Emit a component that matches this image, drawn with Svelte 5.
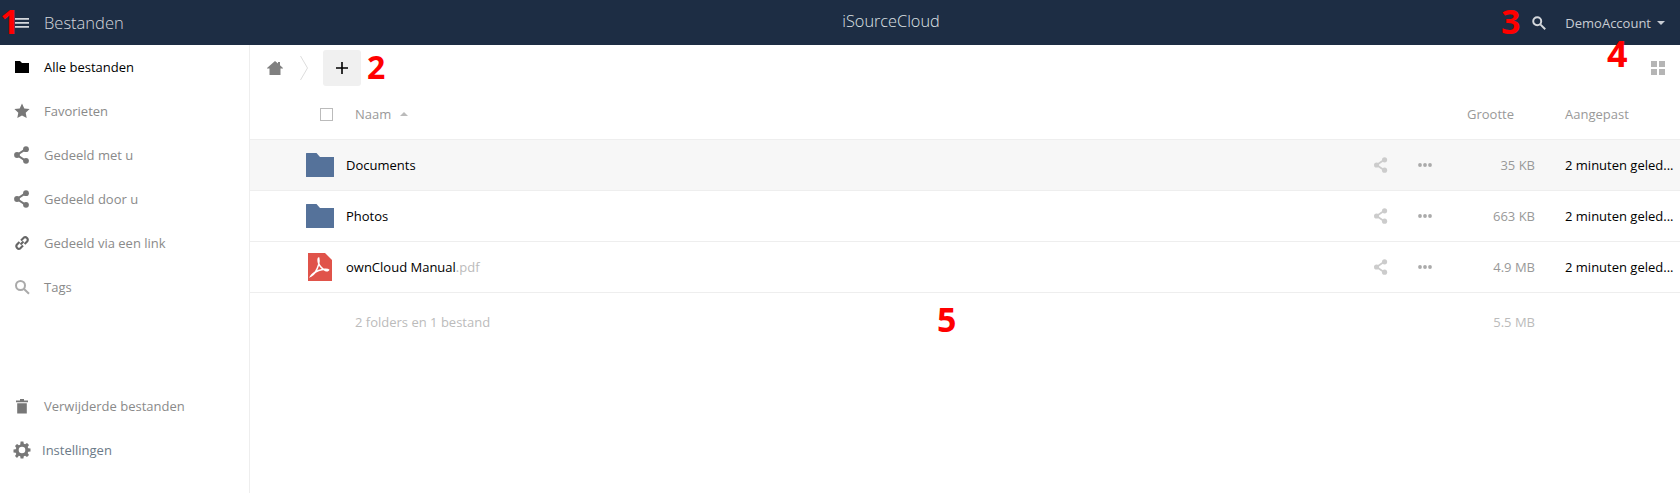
<script>
	const nav = [
		{ label: 'Alle bestanden', icon: 'folder', active: true },
		{ label: 'Favorieten', icon: 'star' },
		{ label: 'Gedeeld met u', icon: 'share' },
		{ label: 'Gedeeld door u', icon: 'share' },
		{ label: 'Gedeeld via een link', icon: 'link' },
		{ label: 'Tags', icon: 'search' }
	];
	const files = [
		{ name: 'Documents', ext: '', size: '35 KB', type: 'dir', hover: true },
		{ name: 'Photos', ext: '', size: '663 KB', type: 'dir' },
		{ name: 'ownCloud Manual', ext: '.pdf', size: '4.9 MB', type: 'pdf' }
	];
</script>

{#snippet shareShape()}
	<path class="share-line" d="M12.700 3.200L4 9l8.700 5.800" />
	<circle cx="13" cy="3.200" r="2.900" />
	<circle cx="4" cy="9" r="2.900" />
	<circle cx="13" cy="14.800" r="2.900" />
{/snippet}

{#snippet glyph(name)}
	<svg class="glyph {name}" viewBox="0 0 18 18" width="18" height="18">
		{#if name === 'folder'}
			<path d="M2 3h5l2 2h7v10H2z" />
		{:else if name === 'star'}
			<path d="M9 1.500l2.300 4.900 5.300.7-3.900 3.700 1 5.300L9 13.500l-4.700 2.600 1-5.300-3.900-3.700 5.300-.7z" />
		{:else if name === 'share'}
			{@render shareShape()}
		{:else if name === 'link'}
			<path class="line" d="M7.500 10.500l3-3M6.500 8l-2.700 2.700a2.600 2.600 0 0 0 3.600 3.600L10 11.600M8 6.400l2.700-2.700a2.600 2.600 0 0 1 3.600 3.600L11.600 10" />
		{:else if name === 'search'}
			<circle class="line" cx="7.500" cy="7.500" r="4.500" />
			<path class="line thick" d="M11 11l5 4.800" />
		{:else if name === 'trash'}
			<path d="M3 3.500h12v1.800H3zM7 2h4v1.500H7zM4.200 6.200h9.600V16.500H4.200z" />
		{:else if name === 'gear'}
			<path fill-rule="evenodd" d="M7.600 1h2.800l.4 2.200 1.300.6 1.900-1.300 2 2-1.300 1.900.6 1.300 2.200.4v2.800l-2.200.4-.6 1.300 1.300 1.900-2 2-1.900-1.300-1.300.6-.4 2.200H7.600l-.4-2.200-1.300-.6L4 17.500l-2-2 1.300-1.900-.6-1.300-2.200-.4V9.100l2.200-.4.6-1.300L2 5.500l2-2 1.900 1.300 1.300-.6zM9 6.200a3.300 3.300 0 1 0 0 6.600 3.300 3.300 0 0 0 0-6.600z" transform="translate(0 -.5)" />
		{/if}
	</svg>
{/snippet}

<div class="page">
	<header class="topbar">
		<div class="left">
			<svg class="burger" viewBox="0 0 14 12" width="14" height="12">
				<path d="M0 1h14v1.700H0zM0 5h14v1.700H0zM0 9h14v1.700H0z" />
			</svg>
			<span class="app-name">Bestanden</span>
		</div>
		<div class="brand">iSourceCloud</div>
		<div class="right">
			<svg class="top-search" viewBox="0 0 18 18" width="16" height="16">
				<circle cx="7" cy="7" r="4.500" />
				<path d="M10.500 10.500l5.500 5.500" />
			</svg>
			<span class="user">DemoAccount</span>
			<span class="caret"></span>
		</div>
	</header>

	<div class="body">
		<nav class="sidebar">
			<ul>
				{#each nav as item}
					<li class:active={item.active}>
						<span class="nav-icon">{@render glyph(item.icon)}</span>
						{item.label}
					</li>
				{/each}
			</ul>
			<ul class="bottom">
				<li class="trash">
					<span class="nav-icon">{@render glyph('trash')}</span>
					Verwijderde bestanden
				</li>
				<li class="settings">
					<span class="nav-icon">{@render glyph('gear')}</span>
					<span class="settings-label">Instellingen</span>
				</li>
			</ul>
		</nav>

		<main class="content">
			<div class="controls">
				<svg class="home" viewBox="0 0 16 14" width="16" height="14">
					<path d="M8 0l3 2.500V1h2v3.200L16 7v.6h-2.500V14h-11V7.600H0V7z" />
				</svg>
				<svg class="crumb" viewBox="0 0 8 24" width="8" height="24">
					<path d="M.5 0l7 12-7 12" />
				</svg>
				<button class="new" aria-label="Nieuw">
					<svg viewBox="0 0 12 12" width="12" height="12"><path d="M5.200 0h1.600v12H5.200zM0 5.200h12v1.600H0z" /></svg>
				</button>
				<svg class="grid-view" viewBox="0 0 14 14" width="14" height="14">
					<path d="M0 0h6v6H0zM8 0h6v6H8zM0 8h6v6H0zM8 8h6v6H8z" />
				</svg>
			</div>

			<div class="row head">
				<span class="check"></span>
				<span class="name-head">Naam <i class="sort"></i></span>
				<span class="size">Grootte</span>
				<span class="date">Aangepast</span>
			</div>

			{#each files as file}
				<div class="row file" class:hover={file.hover}>
					<span class="thumb">
						{#if file.type === 'dir'}
							<svg viewBox="0 0 28 24" width="28" height="24">
								<path d="M0 .5a.5.5 0 0 1 .5-.5H10.500L14 4h14v19.500a.5.5 0 0 1-.5.5H.5a.5.5 0 0 1-.5-.5z" fill="#55729a" />
							</svg>
						{:else}
							<svg viewBox="0 0 24 28" width="24" height="28">
								<path d="M0 0h17l7 7v21H0z" fill="#e0534a" />
								<path d="M3 23c3-1.500 6-6 7.500-11 .5-2 .8-5 .2-7-.5 0-1 2-.2 5 1.500 4 4 6 7 7.500 1.500.5 3 .2 3.200-.6-1-1.200-6-1-10 .6-3.200 1.300-6.500 3.500-7.700 5.500z" fill="none" stroke="#fff" stroke-width="1.500" />
							</svg>
						{/if}
					</span>
					<span class="filename">{file.name}{#if file.ext}<span class="ext">{file.ext}</span>{/if}</span>
					<span class="actions">
						<svg class="act-share" viewBox="0 0 18 18" width="16" height="16">{@render shareShape()}</svg>
						<svg class="act-more" viewBox="0 0 14 4" width="14" height="4">
							<circle cx="2" cy="2" r="1.900" /><circle cx="7" cy="2" r="1.900" /><circle cx="12" cy="2" r="1.900" />
						</svg>
					</span>
					<span class="size value">{file.size}</span>
					<span class="date value">2 minuten geled...</span>
				</div>
			{/each}

			<div class="row summary">
				<span class="sum-label">2 folders en 1 bestand</span>
				<span class="size value">5.5 MB</span>
				<span class="date"></span>
			</div>
		</main>
	</div>

	<span class="mark m1">1</span>
	<span class="mark m2">2</span>
	<span class="mark m3">3</span>
	<span class="mark m4">4</span>
	<span class="mark m5">5</span>
</div>

<style>
	:global(body) {
		margin: 0;
		background: #fff;
	}

	.page {
		position: relative;
		width: 1680px;
		height: 493px;
		overflow: hidden;
		font-family: 'Open Sans', sans-serif;
		font-size: 13px;
		color: #000;
	}

	.topbar {
		height: 45px;
		background: #1d2d44;
		color: #fff;
		display: grid;
		grid-template-columns: 1fr auto 1fr;
		align-items: center;
	}

	.left {
		display: flex;
		align-items: center;
		padding-left: 15px;
		gap: 15px;
	}

	.burger {
		fill: #d5d8dd;
	}

	.app-name {
		font-size: 16.5px;
		font-weight: 300;
		color: #d5d8dd;
	}

	.brand {
		margin-left: 102px;
		padding-bottom: 4px;
		font-size: 16.3px;
		font-weight: 300;
		color: #dfe2e6;
	}

	.right {
		display: flex;
		align-items: center;
		justify-content: flex-end;
		padding-right: 15px;
		color: #c8ccd3;
	}

	.top-search {
		fill: none;
		stroke: #d5d8dd;
		stroke-width: 2.2;
		margin-right: 18px;
	}

	.caret {
		width: 0;
		height: 0;
		margin-left: 6px;
		border: 4px solid transparent;
		border-top-color: #c8ccd3;
		border-bottom: 0;
	}

	.body {
		display: flex;
		height: 448px;
	}

	.sidebar {
		width: 249px;
		border-right: 1px solid #eee;
		display: flex;
		flex-direction: column;
		justify-content: space-between;
		padding-bottom: 21px;
		height: 427px;
	}

	ul {
		list-style: none;
		margin: 0;
		padding: 0;
	}

	li {
		height: 44px;
		display: flex;
		align-items: center;
		color: #8a8a8a;
	}

	li.active {
		color: #000;
	}

	.nav-icon {
		width: 44px;
		padding-left: 13px;
		box-sizing: border-box;
		display: flex;
	}

	.glyph {
		fill: #777;
	}

	li.active .glyph {
		fill: #000;
	}

	.share-line {
		fill: none;
		stroke-width: 2;
	}

	.glyph .share-line {
		stroke: #777;
	}

	.glyph.link,
	.glyph.search {
		fill: none;
	}

	.line {
		fill: none;
		stroke: #666;
		stroke-width: 2.1;
	}

	.glyph.search .line {
		stroke: #aaa;
		stroke-width: 2;
	}

	.thick {
		stroke-width: 2.5;
	}

	.settings .nav-icon {
		width: 42px;
	}

	.settings-label {
		color: #6b7a88;
	}

	.content {
		flex: 1;
		min-width: 0;
	}

	.controls {
		height: 44px;
		display: flex;
		align-items: center;
		padding-left: 17px;
		padding-right: 15px;
	}

	.home {
		fill: #808080;
		margin-right: 17px;
		margin-top: 2px;
	}

	.crumb {
		fill: none;
		stroke: #ddd;
		margin-right: 15px;
		margin-top: 2px;
	}

	.new {
		width: 38px;
		height: 36px;
		border: 0;
		border-radius: 3px;
		background: #f0f0f0;
		display: flex;
		align-items: center;
		justify-content: center;
		padding: 0;
		margin-top: 2px;
	}

	.grid-view {
		margin-left: auto;
		fill: #b5b5b5;
		margin-top: 2px;
	}

	.row {
		display: flex;
		align-items: center;
		height: 50px;
		border-bottom: 1px solid #eee;
	}

	.check {
		width: 11px;
		height: 11px;
		border: 1px solid #bbb;
		margin-left: 70px;
		margin-right: 22px;
	}

	.head {
		color: #999;
	}

	.name-head {
		flex: 1;
		display: flex;
		align-items: center;
		gap: 9px;
	}

	.sort {
		width: 0;
		height: 0;
		border: 4px solid transparent;
		border-bottom-color: #bbb;
		border-top: 0;
	}

	.size {
		width: 90px;
		text-align: right;
		margin-right: 30px;
	}

	.head .size {
		width: 70px;
		margin-right: 51px;
	}

	.date {
		width: 115px;
	}

	.date.value {
		color: #000;
		white-space: nowrap;
	}

	.size.value {
		color: #999;
	}

	.hover {
		background: #f7f7f7;
	}

	.thumb {
		width: 28px;
		margin-left: 56px;
		margin-right: 12px;
		display: flex;
		justify-content: center;
	}

	.filename {
		flex: 1;
	}

	.ext {
		color: #bbb;
	}

	.actions {
		display: flex;
		align-items: center;
		gap: 29px;
		margin-right: 13px;
	}

	.act-share {
		fill: #ccc;
	}

	.act-share .share-line {
		stroke: #ccc;
	}

	.act-more {
		fill: #aaa;
	}

	.summary {
		height: 58px;
		border-bottom: 0;
		color: #bbb;
	}

	.sum-label {
		flex: 1;
		padding-left: 105px;
	}

	.summary .size.value {
		color: #bbb;
	}

	.mark {
		position: absolute;
		color: #f00;
		font-weight: 700;
		font-size: 34px;
		line-height: 1;
	}

	.m1 { left: 0; top: 4px; }
	.m2 { left: 367px; top: 51px; font-size: 32px; }
	.m3 { left: 1501px; top: 4px; }
	.m4 { left: 1607px; top: 36px; font-size: 36px; }
	.m5 { left: 937px; top: 302px; }
</style>
